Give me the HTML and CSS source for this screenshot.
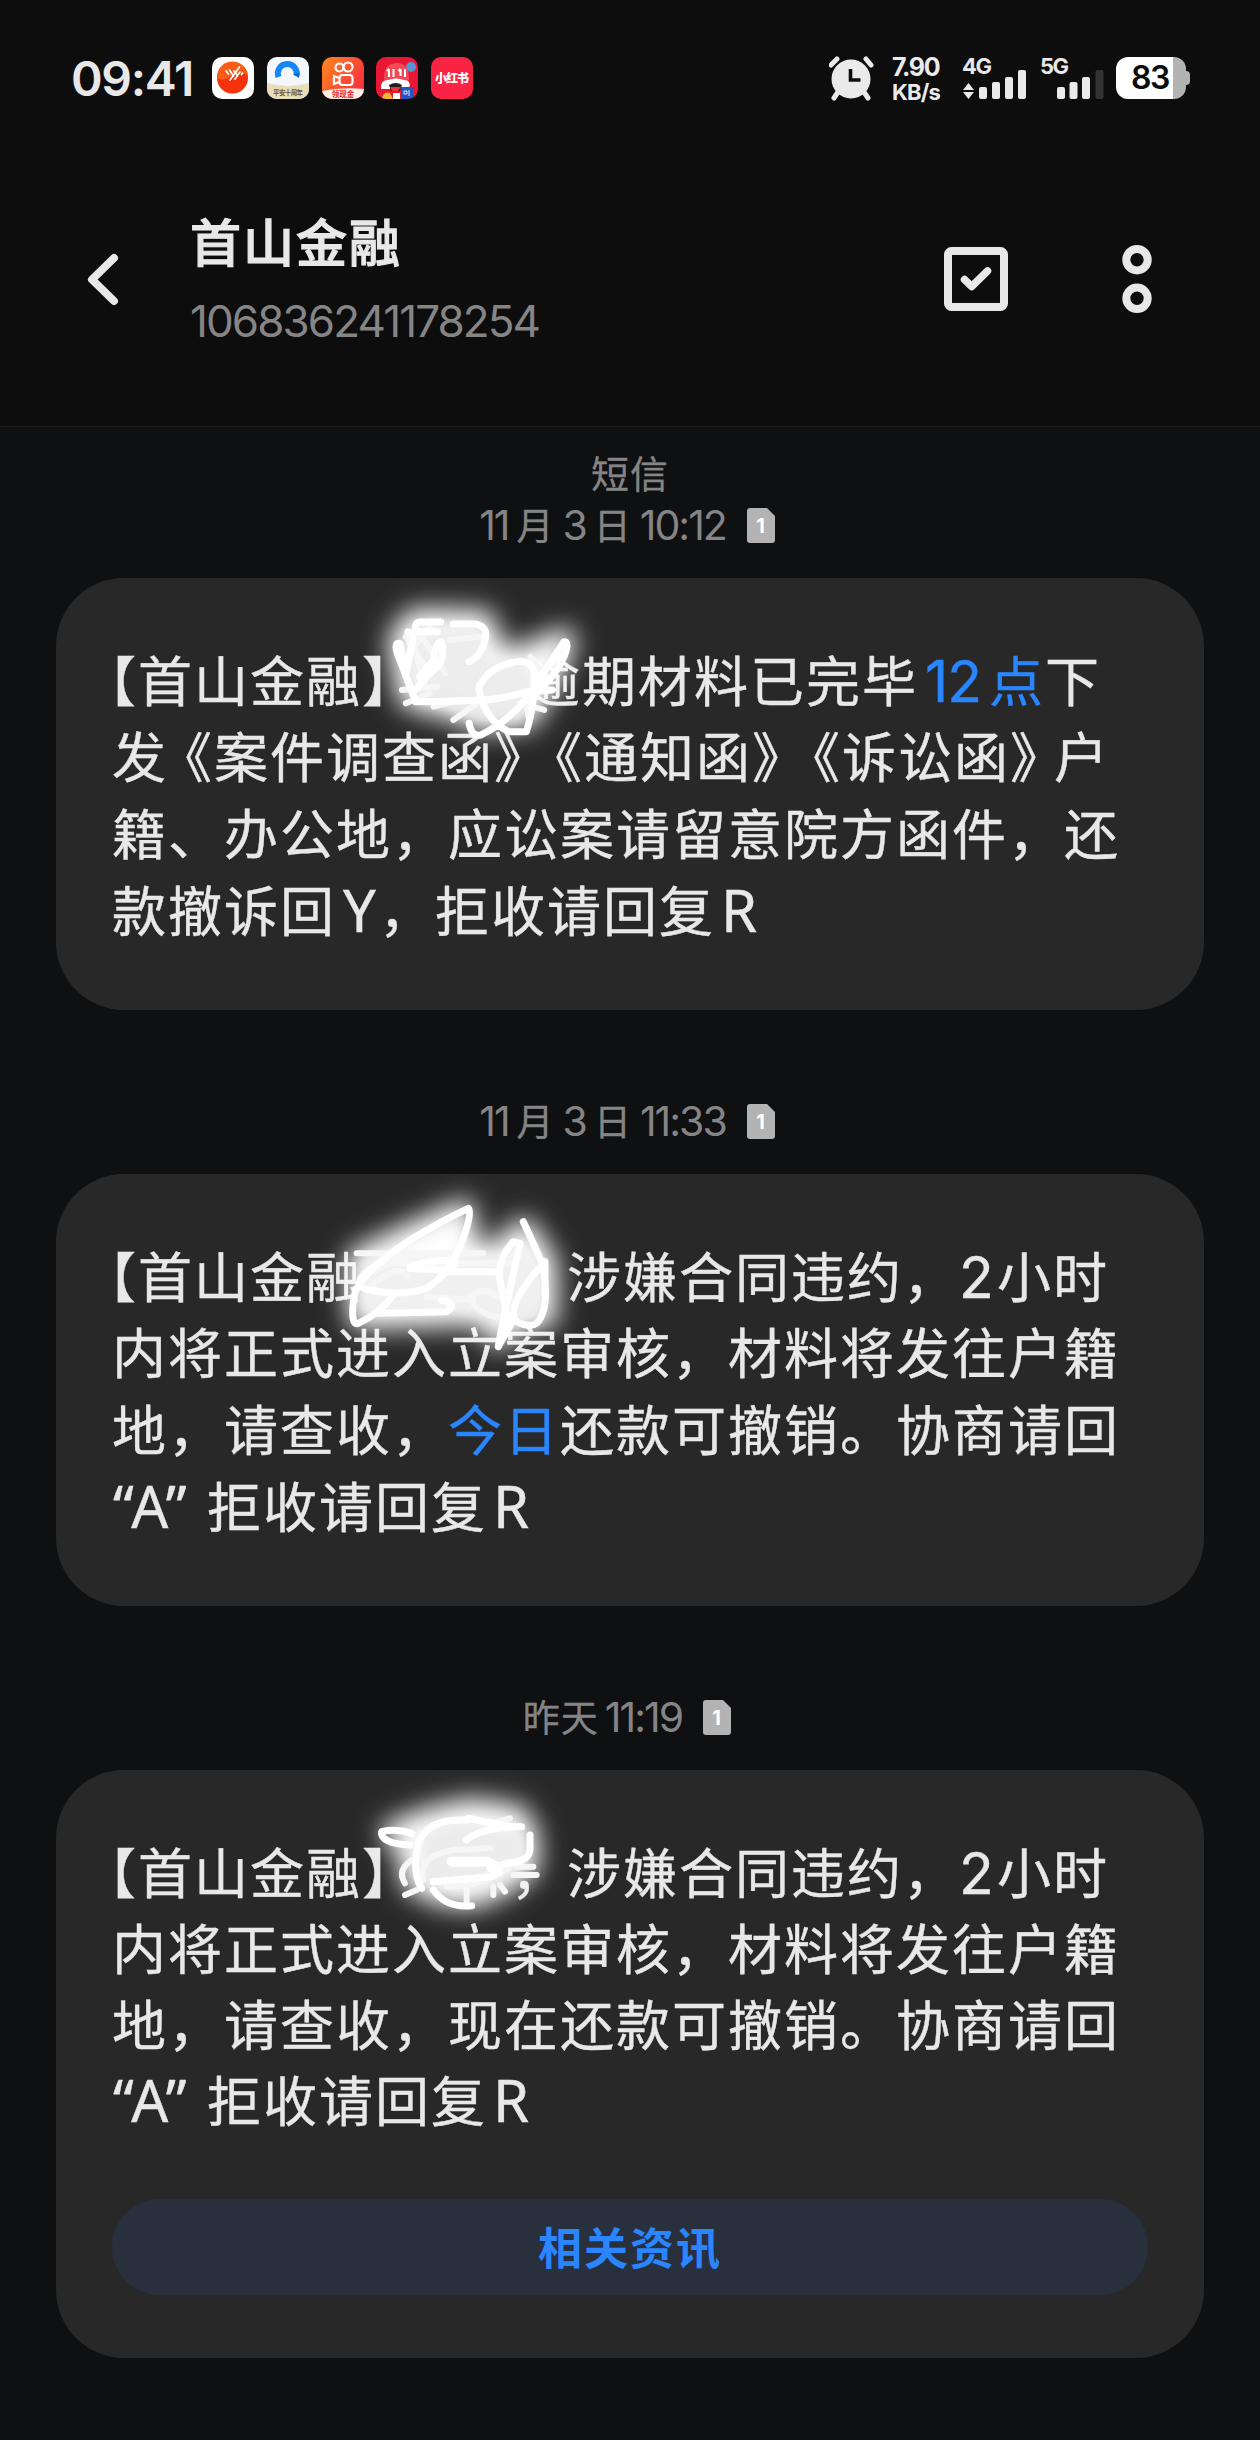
FILE: index.html
```html
<!DOCTYPE html>
<html lang="zh-CN">
<head>
<meta charset="utf-8">
<title>首山金融</title>
<link rel="stylesheet" href="styles.css">
</head>
<body>
<div class="status">
  <div class="clock">09:41</div>
  <div class="apps">
    <svg viewBox="0 0 42 42"><rect width="42" height="42" rx="10" fill="#fff"/><circle cx="20.500" cy="21" r="15.500" fill="#f4330c"/><path d="M5 21a15.500 15.500 0 0 1 31-2C26 10 14 28 5 21z" fill="#fa5b16"/><path d="M14 14l2.500 3M17.500 13l4 6M22 14l3 4M27.500 10L18 23M28 15l-5 7M30.500 16l-1 1.500" stroke="#fff" stroke-width="1.700" stroke-linecap="round"/></svg>
    <svg viewBox="0 0 42 42"><rect width="42" height="42" rx="10" fill="#f3f7fc"/><path d="M0 26q21 6 42 0v6a10 10 0 0 1-10 10H10A10 10 0 0 1 0 32z" fill="#eadcb8"/><path d="M11.500 20a9.500 9.500 0 1 1 18-1" fill="none" stroke="#1487f5" stroke-width="6"/><path d="M26 17l6-1v5z" fill="#1060d8"/><text x="21" y="38" text-anchor="middle" font-size="6.500" font-weight="700" textLength="30" fill="#6b5636">平安十周年</text></svg>
    <svg viewBox="0 0 42 42"><defs><linearGradient id="ks" x2="1" y2=".6"><stop stop-color="#ff8a1e"/><stop offset="1" stop-color="#f9313f"/></linearGradient><clipPath id="tile"><rect width="42" height="42" rx="10"/></clipPath></defs><g clip-path="url(#tile)"><rect width="42" height="42" fill="url(#ks)"/><path d="M0 34q20-4 42-2v10H0z" fill="#fff0e4"/></g><g fill="none" stroke="#fff" stroke-width="2.200"><circle cx="17.500" cy="10.500" r="4"/><circle cx="26" cy="10" r="4.500"/><rect x="17.500" y="18" width="13" height="10" rx="3"/><path d="M17 21l-5-2v8l5-2"/></g><text x="21" y="40" text-anchor="middle" font-size="7.500" font-weight="700" fill="#e8272d">领现金</text></svg>
    <svg viewBox="0 0 42 42"><g clip-path="url(#tile)"><rect width="42" height="42" fill="#ea1734"/><circle cx="35" cy="10" r="5" fill="#5795d6"/><path d="M8 23q-1-16 12-17t13 17" fill="#f34a56"/><path d="M5 32q-1-9 7-9 8-3 16 0 8 0 5 9z" fill="#fff"/><path d="M13 28q7-4 13 0l-2 6H15z" fill="#231d24"/><path d="M14 30h11l-3 4h-6z" fill="#e33"/><path d="M6 42q1-8 8-6l3 6z" fill="#f4b733"/><rect x="25" y="30" width="12" height="12" fill="#2455c3"/><path d="M17 36h7v6h-7z" fill="#fff"/><path d="M28 34h3v3h-3zM33 33v6" stroke="#dce8ff" fill="none"/></g><path d="M13 12v8M17.500 12v8M24.500 12v7M29 12v8M11 14l2-2M22.500 14l2-2" stroke="#fff" stroke-width="2"/></svg>
    <svg viewBox="0 0 42 42"><rect width="42" height="42" rx="10" fill="#fb2343"/><text x="21" y="25.500" text-anchor="middle" font-size="12" font-weight="900" textLength="34" fill="#fff">小红书</text></svg>
  </div>
  <div class="right">
    <svg class="alarm" viewBox="829 56 46 46"><circle cx="851" cy="79" r="19.500" fill="#eaeaea"/><path d="M838 92l-4 6M864 92l4 6M831 65l6-6M866 59l5 6" stroke="#eaeaea" stroke-width="5" stroke-linecap="round"/><path d="M850.500 69v11h10" fill="none" stroke="#0d0d0e" stroke-width="3.600"/></svg>
    <div class="speed"><b>7.90</b><i>KB/s</i></div>
    <div class="net net4"><span>4G</span><svg viewBox="962 68 66 32"><path d="M968.500 83l5.500 7h-11zM968.500 99l5.500-7h-11z"/><rect x="979" y="87" width="8" height="12" rx="2"/><rect x="992" y="82" width="8" height="17" rx="2"/><rect x="1005" y="77" width="8" height="22" rx="2"/><rect x="1018" y="70" width="8" height="29" rx="2"/></svg></div>
    <div class="net net5"><span>5G</span><svg viewBox="1040 68 66 32"><rect x="1057" y="87" width="8" height="12" rx="2"/><rect x="1069.500" y="82" width="8" height="17" rx="2"/><rect x="1082" y="77" width="8" height="22" rx="2"/><rect x="1095.500" y="70" width="8" height="29" rx="2" fill="#343435"/></svg></div>
    <div class="battery">83</div>
  </div>
</div>
<header class="head">
  <svg class="back" viewBox="0 0 36 56"><path d="M30 7L8 28.500 30 50" fill="none" stroke="#e8e8e8" stroke-width="8" stroke-linejoin="round" stroke-linecap="round"/></svg>
  <div class="who"><h1>首山金融</h1><p>106836241178254</p></div>
  <svg class="check" viewBox="0 0 64 64"><rect x="4" y="4" width="56" height="56" rx="3.500" fill="none" stroke="#e8e8e8" stroke-width="8"/><path d="M20.500 32.500l7.200 7L43.500 24" fill="none" stroke="#e8e8e8" stroke-width="7.500" stroke-linejoin="round" stroke-linecap="round"/></svg>
  <svg class="more" viewBox="0 0 30 70"><g fill="none" stroke="#e8e8e8" stroke-width="8"><circle cx="15" cy="15.700" r="10.700"/><circle cx="15" cy="54.300" r="10.700"/></g></svg>
</header>
<main>
  <div class="kind">短信</div>
  <div class="date"><span class="dn">11</span><span class="dc">月</span><span class="dn">3</span><span class="dc">日</span><span class="dn">10:12</span><svg class="sim" viewBox="0 0 28 35"><path d="M3 0h17l8 8v24a3 3 0 0 1-3 3H3a3 3 0 0 1-3-3V3a3 3 0 0 1 3-3z" fill="#b3b3b3"/><text x="13.500" y="25" text-anchor="middle">1</text></svg></div>
  <section class="card">
    <p><span class="lens">【</span>首山金融<span class="gap gap-a">】</span>逾期材料已完毕<a class="num twelve">12</a><a>点</a>下</p>
    <p>发<span class="open">《</span>案件调查函<span class="close">》</span><span class="open">《</span>通知函<span class="close">》</span><span class="open">《</span>诉讼函<span class="close">》</span>户</p>
    <p>籍、办公地，应讼案请留意院方函件，还</p>
    <p>款撤诉回<span class="num y">Y</span>，拒收请回复<span class="num r">R</span></p>
    <svg class="ink" viewBox="0 0 1148 432">
      <g filter="url(#glow)"><g transform="translate(-6 -18) scale(.3954 .3333)" fill="#fff" stroke="#fff" stroke-linejoin="round">
        <path class="halo" d="M885 240L925 180L1095 185L1120 300L1200 290L1300 240L1255 370L1205 470L1090 480L1040 450L910 410Z"/></g></g>
      <g transform="translate(-6 -18) scale(.3954 .3333)">
        <path filter="url(#soften)" d="M900 250L945 200L1090 210L1110 300L1200 310L1240 350L1220 400L1190 480L1100 480L1030 460L930 410Z" fill="#e9e9e9" opacity=".8"/>
        <g class="soft"><path d="M900 230L960 340M930 210L1000 340M960 200L920 260L950 380M1010 240L1090 230M890 390L980 380M900 430L960 400M970 440L1040 420M1020 480L1080 430M1200 400L1210 470M1215 290L1245 340M1190 430L1250 450"/></g>
        <g class="line"><path d="M988 186L935 186Q920 190 925 215L980 215M1020 192L1075 192Q1110 200 1100 240Q1090 290 1060 305M925 425L885 300Q865 245 885 250L900 340L920 225L905 215M925 390Q950 350 980 320Q1000 290 990 245Q975 245 970 300L935 350M925 425Q1040 425 1120 418Q1170 408 1210 395L1270 390M1085 380Q1110 320 1180 305Q1225 300 1225 350Q1225 440 1205 515L1160 515Q1100 480 1085 390M1060 490Q1065 530 1090 525Q1190 465 1245 345L1300 245Q1315 245 1300 290Q1280 345 1240 385M1240 350L1285 280"/></g>
      </g>
    </svg>
  </section>
  <div class="date"><span class="dn">11</span><span class="dc">月</span><span class="dn">3</span><span class="dc">日</span><span class="dn">11:33</span><svg class="sim" viewBox="0 0 28 35"><path d="M3 0h17l8 8v24a3 3 0 0 1-3 3H3a3 3 0 0 1-3-3V3a3 3 0 0 1 3-3z" fill="#b3b3b3"/><text x="13.500" y="25" text-anchor="middle">1</text></svg></div>
  <section class="card">
    <p><span class="lens">【</span>首山金融<span class="gap gap-b"></span>，涉嫌合同违约，<span class="num two">2</span>小时</p>
    <p>内将正式进入立案审核，材料将发往户籍</p>
    <p>地，请查收，<a>今日</a>还款可撤销。协商请回</p>
    <p><span class="num quote">“A”</span>拒收请回复<span class="num r">R</span></p>
    <svg class="ink" viewBox="0 0 1148 432">
      <g filter="url(#glow)"><g transform="translate(244 -14) scale(.3333)" fill="#fff" stroke="#fff" stroke-linejoin="round">
        <path class="halo" d="M175 300L330 225L490 155L490 270L600 290L670 210L735 310L735 470L640 480L595 530L570 460L180 470Z"/></g></g>
      <g transform="translate(244 -14) scale(.3333)">
        <path filter="url(#soften)" d="M190 290L540 280L600 300L665 260L725 310L715 480L620 480L440 440L200 460Z" fill="#ededed" opacity=".8"/>
        <g class="soft"><path d="M170 280H550M230 310H640M190 350L310 290M200 390Q300 300 320 350M500 420Q550 370 590 410M520 430Q560 480 630 470M380 410L520 420"/></g>
        <g class="line"><path d="M175 490Q150 500 162 410Q170 350 330 240Q430 180 505 145Q520 160 480 260Q440 350 380 385Q300 410 210 390Q160 380 190 345L260 290M330 320Q380 300 465 300Q470 335 420 330L330 325M420 335H580M175 490Q240 460 280 405M235 460L440 455Q475 430 425 420M670 185Q710 270 730 320Q750 450 710 490Q690 505 650 485M595 560Q605 500 660 250L640 245Q590 300 600 360L625 490M595 560L640 480M645 480Q620 430 735 305V400"/></g>
      </g>
    </svg>
  </section>
  <div class="date"><span class="dd">昨天</span><span class="dn">11:19</span><svg class="sim" viewBox="0 0 28 35"><path d="M3 0h17l8 8v24a3 3 0 0 1-3 3H3a3 3 0 0 1-3-3V3a3 3 0 0 1 3-3z" fill="#b3b3b3"/><text x="13.500" y="25" text-anchor="middle">1</text></svg></div>
  <section class="card last">
    <p><span class="lens">【</span>首山金融<span class="gap gap-c">】</span>，涉嫌合同违约，<span class="num two">2</span>小时</p>
    <p>内将正式进入立案审核，材料将发往户籍</p>
    <p>地，请查收，现在还款可撤销。协商请回</p>
    <p><span class="num quote">“A”</span>拒收请回复<span class="num r">R</span></p>
    <button class="news">相关资讯</button>
    <svg class="ink" viewBox="0 0 1148 432">
      <g filter="url(#glow)"><g transform="translate(274 0) scale(.3333)" fill="#fff" stroke="#fff" stroke-linejoin="round">
        <path class="halo" d="M190 190L290 150L420 120L560 140L590 200L590 290L520 340L430 380L330 370L250 330L240 230Z"/></g></g>
      <g transform="translate(274 0) scale(.3333)">
        <path filter="url(#soften)" d="M270 200Q330 155 430 155L560 185L580 260L500 320L420 350L280 340Z" fill="#e8e8e8" opacity=".8"/>
        <g class="soft"><path d="M245 270Q200 300 225 340M225 375L260 360M410 360V400M490 350V375M510 345L525 365M560 290H610M550 315H620M280 330Q260 260 370 240L480 235M490 160L540 145M350 350Q460 350 540 290"/></g>
        <g class="line"><path d="M245 190Q200 175 155 185Q150 220 240 225M420 145L520 170H575M410 150Q290 145 265 220Q245 310 275 355M410 210Q440 180 540 170L415 145M600 195V240Q595 275 540 278L480 295M365 275H460Q500 275 510 305L480 320L310 335M310 360Q350 415 425 407"/></g>
        <path d="M365 275H470L500 290" fill="none" stroke="#fff" stroke-width="30" stroke-linecap="round"/>
      </g>
    </svg>
  </section>
</main>
<svg width="0" height="0" class="defs"><defs><filter id="glow" x="0" y="-60" width="1148" height="460" filterUnits="userSpaceOnUse"><feGaussianBlur stdDeviation="13"/></filter><filter id="soften"><feGaussianBlur stdDeviation="14"/></filter></defs></svg>
</body>
</html>
```
FILE: styles.css
```css
* { box-sizing: border-box; margin: 0; padding: 0; }
body {
  width: 1260px;
  height: 2440px;
  overflow: hidden;
  background: #0f1012;
  color: #e8e8e8;
  font-family: "Noto Sans CJK SC", sans-serif;
  text-spacing-trim: space-all;
}
svg { display: block; flex: none; }
.defs { position: absolute; }

.status { display: flex; height: 156px; padding: 57px 70px 0 71px; align-items: flex-start; background: #0d0d0e; font-family: Inter, sans-serif; }
.clock { width: 141px; font-size: 48px; line-height: 43px; font-weight: 600; white-space: nowrap; letter-spacing: -1.3px; }
.apps { display: flex; gap: 12.8px; font-family: "Noto Sans CJK SC", sans-serif; }
.apps svg { width: 42px; height: 42px; }
.right { display: flex; margin-left: auto; }
.alarm { width: 46px; height: 46px; margin-top: -1px; margin-right: 17px; }
.speed { width: 70px; font-weight: 700; color: #eaeaea; }
.speed b, .speed i { display: block; font-style: normal; white-space: nowrap; }
.speed b { font-size: 25px; line-height: 20px; letter-spacing: -1.3px; font-weight: 700; }
.speed i { font-size: 22px; line-height: 26px; margin-top: 2px; letter-spacing: -.8px; }
.net { width: 78px; font-weight: 700; font-size: 22px; line-height: 18px; letter-spacing: -1.5px; }
.net span { display: block; height: 11px; }
.net svg { width: 66px; height: 32px; fill: #eaeaea; }
.net5 { width: 76px; }
.battery {
  position: relative;
  width: 70px;
  height: 42px;
  margin-right: 4px;
  padding-left: 15px;
  border-radius: 12px;
  background: linear-gradient(90deg, #fff 57px, #b3b3b3 57px);
  color: #0d0d0e;
  font-size: 32px;
  line-height: 42px;
  font-weight: 600;
  letter-spacing: -1.5px;
}
.battery::after { content: ""; position: absolute; left: 70px; top: 14px; width: 4px; height: 14px; border-radius: 0 4px 4px 0; background: #b3b3b3; }

.head { display: flex; height: 271px; padding: 0 108px 0 84px; background: #0d0d0e; border-bottom: 1px solid #1b1c1d; align-items: flex-start; }
.back { width: 36px; height: 56px; margin-top: 95px; }
.who { margin-left: 70px; padding-top: 49px; }
.who h1 { font-size: 51px; line-height: 70px; font-weight: 500; letter-spacing: 2px; -webkit-text-stroke: 1.1px #e8e8e8; }
.who p { font: 44px/56px Inter, sans-serif; color: #858585; letter-spacing: -1.9px; margin-top: 17.500px; }
.check { width: 64px; height: 64px; margin: 91px 0 0 auto; }
.more { width: 30px; height: 70px; margin: 88px 0 0 114px; }

main { display: flex; flex-direction: column; padding: 19px 56px 0; }
.kind { height: 52px; line-height: 52px; font-size: 38px; letter-spacing: 1px; text-align: center; color: #858585; -webkit-text-stroke: .3px; }
.date { display: flex; height: 54px; line-height: 54px; margin-bottom: 26px; padding-right: 6px; align-items: center; justify-content: center; color: #858585; font-size: 37px; white-space: nowrap; }
.dn { font-family: Inter, sans-serif; font-size: 41px; letter-spacing: -2px; }
.dc { margin: -3px 9px 0 8px; -webkit-text-stroke: .3px; }
.dd { margin: -3px 6px 0 0; letter-spacing: 1px; -webkit-text-stroke: .3px; }
.sim { width: 28px; height: 35px; margin-left: 21px; }
.sim text { font: 700 20px Inter, sans-serif; fill: #fff; }

.card { position: relative; height: 432px; margin-bottom: 84px; padding: 62.500px 56px 0; border-radius: 68px; background: #282828; }
.card.last { height: 588px; margin-bottom: 0; }
.card p { height: 76.700px; line-height: 76.700px; font-size: 54px; letter-spacing: 2px; white-space: nowrap; -webkit-text-stroke: .4px; }
.last p { height: 76.300px; }
.card a { color: #2a85ff; }
.num { display: inline-block; height: 76px; vertical-align: baseline; font-family: Inter, "Noto Sans", sans-serif; }
.lens { margin-left: -30px; }
.open, .close { display: inline-block; font-feature-settings: "halt"; }
.open { width: 46px; padding-left: 17px; }
.close { width: 44px; }
.gap { display: inline-block; white-space: nowrap; }
.gap-a { width: 164px; }
.gap-b { width: 149px; }
.gap-c { width: 149px; }
.twelve { width: 71px; padding-left: 7px; letter-spacing: -1px; font-size: 57px; }
.two { width: 38px; font-size: 57px; }
.y { width: 43px; padding-left: 7px; font-family: "Noto Sans", sans-serif; font-size: 58px; }
.r { padding-left: 6px; font-family: "Noto Sans", sans-serif; font-size: 58px; }
.quote { width: 95px; padding-left: 1px; letter-spacing: 1.5px; font-family: "Noto Sans", sans-serif; font-size: 58px; }

.ink { position: absolute; left: 0; top: 0; width: 1148px; height: 432px; overflow: visible; }
.halo { stroke-width: 24px; vector-effect: non-scaling-stroke; }
.soft path, .line path { fill: none; stroke-linecap: round; stroke-linejoin: round; vector-effect: non-scaling-stroke; }
.soft path { stroke: #f6f6f6; stroke-width: 6px; }
.line path { stroke: #fff; stroke-width: 7px; }

.news { display: flex; width: 1036px; height: 96px; margin-top: 61.500px; padding-bottom: 3px; align-items: center; justify-content: center; border: 0; border-radius: 48px; background: #29303d; color: #2a85ff; font: 700 44px "Noto Sans CJK SC", sans-serif; letter-spacing: 2px; }
```
